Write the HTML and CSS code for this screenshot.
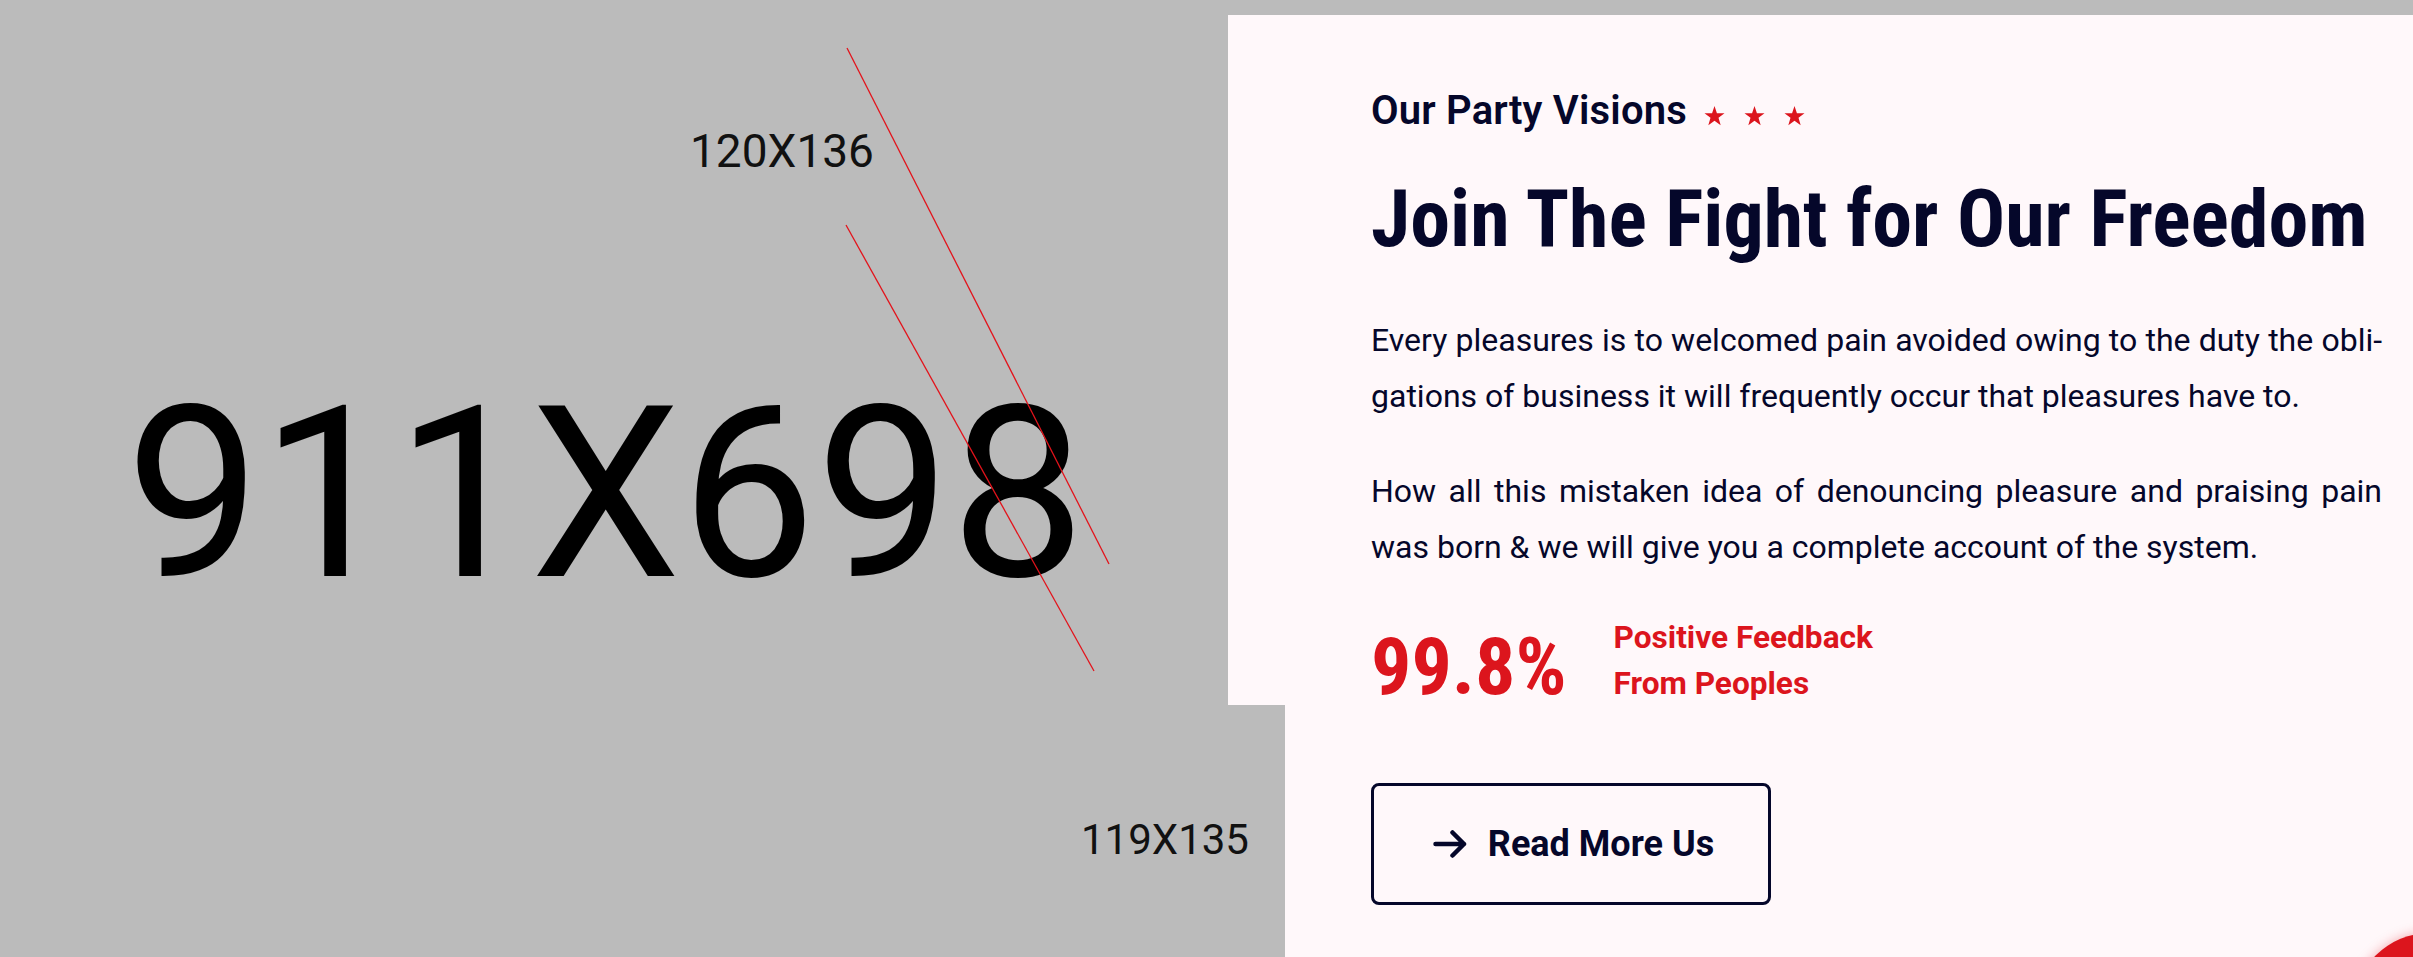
FILE: index.html
```html
<!DOCTYPE html>
<html lang="en">
<head>
<meta charset="utf-8">
<title>Our Party Visions</title>
<link rel="stylesheet" href="styles.css">
</head>
<body>
<section class="about">
  <div class="media"></div>
  <div class="panel">
    <div class="sub-title">
      <span>Our Party Visions</span>
      <span class="stars">
        <svg viewBox="0 0 24 23"><polygon points="12,0 14.8,8.2 23.5,8.4 16.6,13.6 19.1,22 12,17 4.9,22 7.4,13.6 0.5,8.4 9.2,8.2"/></svg>
        <svg viewBox="0 0 24 23"><polygon points="12,0 14.8,8.2 23.5,8.4 16.6,13.6 19.1,22 12,17 4.9,22 7.4,13.6 0.5,8.4 9.2,8.2"/></svg>
        <svg viewBox="0 0 24 23"><polygon points="12,0 14.8,8.2 23.5,8.4 16.6,13.6 19.1,22 12,17 4.9,22 7.4,13.6 0.5,8.4 9.2,8.2"/></svg>
      </span>
    </div>
    <h2 class="title">Join The Fight for Our Freedom</h2>
    <p class="text">Every pleasures is to welcomed pain avoided owing to the duty the obli&shy;gations of business it will frequently occur that pleasures have to.</p>
    <p class="text">How all this mistaken idea of denouncing pleasure and praising pain was born &amp; we will give you a complete account of the system.</p>
    <div class="stat">
      <span class="stat-num">99.8%</span>
      <span class="stat-label">Positive Feedback<br>From Peoples</span>
    </div>
    <a class="btn" href="#">
      <svg class="btn-icon" viewBox="0 0 34 30"><path d="M2.5 15 H31 M19.5 3.5 L31 15 L19.5 26.5"/></svg>
      <span>Read More Us</span>
    </a>
  </div>

  <div class="ph ph-main">911X698</div>
  <div class="ph ph-top">120X136</div>
  <svg class="lines" viewBox="0 0 1300 957">
    <line x1="847" y1="48" x2="1109" y2="564"/>
    <line x1="846" y1="225" x2="1094" y2="671"/>
  </svg>
  <div class="ph ph-bottom">119X135</div>
</section>
<a class="scroll-top" href="#"></a>
</body>
</html>
```

FILE: styles.css
```css
html, body {
  margin: 0;
  padding: 0;
}

body {
  background: #bbbbbb;
  font-family: Roboto, "Liberation Sans", sans-serif;
  overflow: hidden;
}

.about {
  position: relative;
  display: grid;
  grid-template-columns: 1228px 1fr;
  padding-top: 15px;
  min-height: 942px;
}

.panel {
  background: #fff8fa;
  padding: 73px 0 0 143px;
  color: #05072a;
}

.sub-title {
  display: flex;
  align-items: flex-end;
  gap: 17px;
  font-size: 40px;
  line-height: 46px;
  font-weight: 600;
  letter-spacing: 0.2px;
}

.stars {
  display: flex;
  gap: 19px;
  margin-bottom: 8px;
}

.stars svg {
  width: 21px;
  height: 20px;
  fill: #dc151d;
}

.title {
  margin: 40px 0 0;
  font-family: "Roboto Condensed", Roboto, sans-serif;
  font-size: 80px;
  line-height: 90px;
  font-weight: 700;
}

.text {
  margin: 48px 0 0;
  max-width: 1011px;
  font-size: 32px;
  line-height: 56px;
  text-align: justify;
}

.text + .text {
  margin-top: 39px;
}

.stat {
  display: flex;
  align-items: flex-end;
  gap: 47px;
  margin-top: 40px;
  color: #dc151d;
  font-weight: 700;
}

.stat-num {
  font-family: "Roboto Condensed", Roboto, sans-serif;
  font-size: 80px;
  line-height: 80px;
}

.stat-label {
  font-size: 31.6px;
  line-height: 46px;
}

.btn {
  margin-top: 76px;
  display: flex;
  align-items: center;
  justify-content: center;
  gap: 21px;
  box-sizing: border-box;
  width: 400px;
  height: 122px;
  padding-left: 5px;
  border: 3px solid #05072a;
  border-radius: 8px;
  font-size: 36px;
  font-weight: 700;
  color: #05072a;
  text-decoration: none;
}

.btn-icon {
  width: 34px;
  height: 30px;
  fill: none;
  stroke: #05072a;
  stroke-width: 4.5;
  stroke-linecap: round;
  stroke-linejoin: round;
}

.ph {
  position: absolute;
  display: flex;
  align-items: center;
  justify-content: center;
  line-height: 1;
  color: #000;
  font-family: Roboto, "Liberation Sans", sans-serif;
}

.ph-main {
  left: 150px;
  top: 145px;
  width: 911px;
  height: 698px;
  font-size: 240px;
}

.ph-top {
  left: 662px;
  top: 83px;
  width: 240px;
  height: 136px;
  font-size: 46px;
  color: #111;
}

.ph-bottom {
  left: 1045px;
  top: 705px;
  width: 240px;
  height: 270px;
  font-size: 42px;
  color: #111;
  background: #bbbbbb;
  z-index: 2;
}

.lines {
  position: absolute;
  left: 0;
  top: 0;
  width: 1300px;
  height: 957px;
  z-index: 1;
  pointer-events: none;
}

.lines line {
  stroke: #e3131b;
  stroke-width: 1.3;
}

.scroll-top {
  position: fixed;
  left: 2353px;
  top: 933px;
  width: 154px;
  height: 154px;
  border-radius: 50%;
  background: #dc151d;
  box-shadow: 0 0 12px rgba(220, 21, 29, 0.35);
}
```
